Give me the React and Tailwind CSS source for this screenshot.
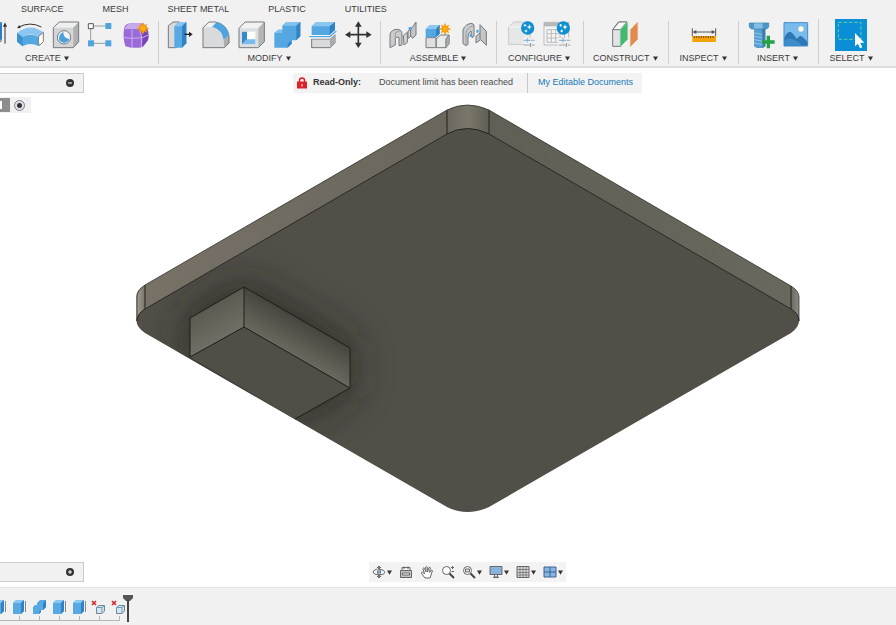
import React, { useState } from 'react';

const OUTLINE = '#77797b';

const Caret = () => (
    <svg viewBox="0 0 5 5" className="w-[5px] h-[5px] shrink-0" aria-hidden="true">
        <path d="M0 0.5H5L2.5 4.8Z" fill="#333" />
    </svg>
);

// Toolbar icons are all drawn on an 84 unit grid
const Icon = ({ children }) => (
    <svg viewBox="0 0 84 84" className="w-7 h-7 block overflow-visible" aria-hidden="true" strokeLinejoin="round">
        {children}
    </svg>
);

const Spark = ({ x, y }) => (
    <g transform={`translate(${x} ${y})`} fill="#f59c0b">
        <path d="M0-19L4-9L13-13L9-4L19 0L9 4L13 13L4 9L0 19L-4 9L-13 13L-9 4L-19 0L-9-4L-13-13L-4-9Z" />
        <circle r="7" fill="#fbae17" />
    </g>
);

const PlusBadge = ({ x, y }) => (
    <g transform={`translate(${x} ${y})`}>
        <circle r="20" fill="#0f8fd2" />
        <path d="M5-12L7-5L13-3L7-1L5 6L3-1L-3-3L3-5Z" fill="#fff" />
        <path d="M-8-12V-4M-12-8H-4M-5 5V13M-9 9H-1" stroke="#fff" strokeWidth="3" />
    </g>
);

const Sliders = ({ x, y }) => (
    <g transform={`translate(${x} ${y})`} strokeWidth="3" fill="none">
        <path d="M0 0H10M24 0H34M0 14H20M26 14H34" stroke="#a4a6a8" />
        <path d="M12-6V6M8 0H22" stroke="#6fb2e4" />
        <path d="M22 8V20" stroke="#8f9193" />
    </g>
);

const ICONS = {
    extrude: (
        <Icon>
            <path d="M10 16L26 3H72V54L58 66H10Z" fill="#4ba0de" />
            <path d="M58 16L72 3V54L58 66Z" fill="#2b7fc0" />
            <path d="M58 70L72 58" stroke={OUTLINE} strokeWidth="3" />
            <path d="M81 68V14" stroke="#333" strokeWidth="3" />
            <path d="M81 4L75 17H87Z" fill="#333" />
        </Icon>
    ),
    revolve: (
        <Icon>
            <path d="M13 19Q48 0 82 18" fill="none" stroke="#333" strokeWidth="3" />
            <path d="M9 22L16 12L20 21Z" fill="#333" />
            <path d="M9 36Q48 4 88 34L74 48Q48 32 26 48L9 36Z" fill="#8cc6f0" />
            <path d="M9 36L26 48Q48 34 74 48V76Q48 62 26 76L9 62Z" fill="#55a7e2" />
            <path d="M9 36L26 48V76L9 62Z" fill="#3c91d2" />
            <path d="M74 46L88 34V62L76 74Q70 60 74 46Z" fill="#fff" stroke={OUTLINE} strokeWidth="3" />
        </Icon>
    ),
    hole: (
        <Icon>
            <path d="M10 20L28 3H86V62L70 80H10Z" fill="#d4d5d6" />
            <path d="M10 20L28 3H86L70 20Z" fill="#eeefef" />
            <path d="M70 20L86 3V62L70 80Z" fill="#aeb0b2" />
            <path d="M10 20L28 3H86V62L70 80H10Z" fill="none" stroke={OUTLINE} strokeWidth="3" />
            <circle cx="42" cy="49" r="20" fill="#f3f4f4" stroke={OUTLINE} strokeWidth="3" />
            <path d="M40 33Q40 52 58 54A17 17 0 0 1 28 58Q24 40 40 33Z" fill="#4c9fdc" />
        </Icon>
    ),
    pattern: (
        <Icon>
            <path d="M24 15H58M14 24V58M24 67H58" stroke="#9a9c9e" strokeWidth="3" />
            <rect x="7" y="8" width="15" height="15" fill="#fff" stroke="#555" strokeWidth="3" />
            <rect x="58" y="6" width="18" height="18" fill="#4fa3df" />
            <rect x="6" y="58" width="18" height="18" fill="#4fa3df" />
            <rect x="58" y="58" width="18" height="18" fill="#4fa3df" />
        </Icon>
    ),
    form: (
        <Icon>
            <path d="M6 24Q8 8 26 7H62Q80 14 80 44Q78 62 62 78Q36 84 10 76Q2 50 6 24Z" fill="#9a6bd8" />
            <path d="M8 24Q14 8 28 7H60L52 24Q28 20 8 24Z" fill="#c7a9f0" />
            <path d="M56 24L66 14Q84 34 78 58L60 78Q64 50 56 24Z" fill="#7743b5" />
            <path d="M30 22V79M5 50Q34 54 60 50L80 42M8 24Q30 19 54 24Q62 50 58 78M30 22L42 7" fill="none" stroke="#c9aef2" strokeWidth="3" />
            <Spark x={63} y={22} />
        </Icon>
    ),
    pressPull: (
        <Icon>
            <path d="M10 14L24 3H44V68L34 80H10Z" fill="#d9dadb" stroke={OUTLINE} strokeWidth="3" />
            <path d="M28 16L42 3H64V67L51 80H28Z" fill="#57a8e3" />
            <path d="M28 16L42 3H64L51 16Z" fill="#8cc7f2" />
            <path d="M51 16L64 3V67L51 80Z" fill="#2f83c4" />
            <path d="M58 40H74" stroke="#222" strokeWidth="4" />
            <path d="M72 32L83 40L72 48Z" fill="#222" />
        </Icon>
    ),
    fillet: (
        <Icon>
            <path d="M6 20L24 3H44Q78 10 84 44V66L70 80H6Z" fill="#d9dadb" />
            <path d="M68 58L84 42V66L70 80Z" fill="#aaacae" />
            <path d="M6 20L24 3H44L32 18Z" fill="#f2f2f2" />
            <path d="M6 20L24 3H44Q78 10 84 44V66L70 80H6Z" fill="none" stroke={OUTLINE} strokeWidth="3" />
            <path d="M34 17L48 3Q78 12 84 42L68 56Q64 26 34 17Z" fill="#4fa4e0" />
        </Icon>
    ),
    shell: (
        <Icon>
            <path d="M6 22L24 3H82V62L64 80H6Z" fill="#dddedf" />
            <path d="M6 22L24 3H82L64 22Z" fill="#f2f2f2" />
            <path d="M64 22L82 3V62L64 80Z" fill="#b4b6b8" />
            <path d="M6 22L24 3H82V62L64 80H6Z" fill="none" stroke={OUTLINE} strokeWidth="3" />
            <rect x="15" y="32" width="40" height="38" fill="#fff" />
            <path d="M15 32L30 32V55L15 70Z" fill="#3489ca" />
            <path d="M15 70L30 55H55V70Z" fill="#7cbcec" />
        </Icon>
    ),
    combine: (
        <Icon>
            <path d="M4 36L16 26H28V14L40 3H82V46L70 58H56V68L44 80H4Z" fill="#55a7e2" />
            <path d="M28 14L40 3H82L70 14Z" fill="#83c1ef" />
            <path d="M4 36L16 26H28V36Z" fill="#83c1ef" />
            <path d="M70 14L82 3V46L70 58ZM44 68L56 58V68L44 80Z" fill="#3285c6" />
        </Icon>
    ),
    split: (
        <Icon>
            <path d="M8 16L22 3H78V28L62 42H8Z" fill="#55a7e2" />
            <path d="M8 16L22 3H78L62 16Z" fill="#8cc7f2" />
            <path d="M62 16L78 3V28L62 42Z" fill="#2f83c4" />
            <path d="M8 54H62L78 40V66L64 80H8Z" fill="#d9dadb" stroke={OUTLINE} strokeWidth="3" />
            <path d="M62 54L78 40V66L64 80Z" fill="#a9abad" />
            <path d="M2 48H62L82 30" fill="none" stroke="#fff" strokeWidth="9" />
            <path d="M1 47H62L82 30" fill="none" stroke="#4fa4e0" strokeWidth="4" />
        </Icon>
    ),
    move: (
        <Icon>
            <path d="M40 12V70M11 41H69" stroke="#333" strokeWidth="5" />
            <path d="M40 1L30 17H50ZM40 81L30 65H50ZM0 41L16 31V51ZM80 41L64 31V51Z" fill="#333" />
        </Icon>
    ),
    joint: (
        <Icon>
            <path d="M6 80V40Q10 25 28 25Q42 26 42 40V72L33 74V50Q26 44 22 53V72Z" fill="#c9cbcc" stroke={OUTLINE} strokeWidth="3" />
            <path d="M22 53V35L38 28" fill="none" stroke="#9a9c9e" strokeWidth="3" />
            <path d="M46 44L58 34V64L48 72ZM60 30L68 24V46L60 52Z" fill="#d4d5d6" stroke={OUTLINE} strokeWidth="3" />
            <path d="M68 26L84 3V42L74 52L68 44Z" fill="#c3c5c7" stroke={OUTLINE} strokeWidth="3" />
            <path d="M62 18H71V27H62Z" fill="#55a7e2" />
        </Icon>
    ),
    component: (
        <Icon>
            <path d="M6 50H36V80H6Z" fill="#dedfe0" stroke={OUTLINE} strokeWidth="3" />
            <path d="M37 54L49 42H75L66 54V80H37Z" fill="#e9eaea" stroke={OUTLINE} strokeWidth="3" />
            <path d="M66 54L76 42V68L66 80Z" fill="#a9abad" stroke={OUTLINE} strokeWidth="2" />
            <path d="M5 24L17 12H47V38L36 49H5Z" fill="#55a7e2" />
            <path d="M5 24L17 12H47L36 24Z" fill="#8cc7f2" />
            <path d="M36 24L47 12V38L36 49Z" fill="#2f83c4" />
            <Spark x={63} y={24} />
        </Icon>
    ),
    asBuilt: (
        <Icon>
            <path d="M9 68V26Q17 8 36 7L42 12V46L36 50L33 30Q24 34 24 48V70L18 74Z" fill="#c9cbcc" stroke={OUTLINE} strokeWidth="3" />
            <path d="M18 72V34Q22 20 40 14" fill="none" stroke="#9a9c9e" strokeWidth="3" />
            <path d="M48 46L60 36V11L79 31V73L62 56L48 66Z" fill="#c3c5c7" stroke={OUTLINE} strokeWidth="3" />
            <path d="M60 36V56" stroke={OUTLINE} strokeWidth="3" />
            <path d="M29 38H36V48H29ZM49 26H56V35H49Z" fill="#55a7e2" />
        </Icon>
    ),
    configure: (
        <Icon>
            <path d="M5 18L20 3H70V56L56 70H5Z" fill="#e6e7e7" stroke="#c6c8c9" strokeWidth="3" />
            <path d="M5 18H56V70" fill="none" stroke="#f5f5f5" strokeWidth="3" />
            <rect x="48" y="50" width="36" height="32" fill="#f0f0f0" />
            <PlusBadge x={62} y={21} />
            <Sliders x={49} y={58} />
        </Icon>
    ),
    configTable: (
        <Icon>
            <rect x="3" y="4" width="74" height="68" fill="#f4f4f4" stroke="#b9bbbc" strokeWidth="3" />
            <rect x="3" y="4" width="74" height="12" fill="#b6b8b9" />
            <path d="M12 26H64V64H12ZM12 38H64M12 51H64M25 26V64M38 26V64M51 26V64" fill="none" stroke="#b9bbbc" strokeWidth="3" />
            <rect x="44" y="50" width="40" height="32" fill="#f0f0f0" />
            <PlusBadge x={61} y={21} />
            <Sliders x={48} y={58} />
        </Icon>
    ),
    plane: (
        <Icon>
            <path d="M5 26L22 3H48L30 22V76H5Z" fill="#e2e3e4" stroke={OUTLINE} strokeWidth="3" />
            <path d="M5 26L24 3H48L28 26Z" fill="#f6f6f6" stroke={OUTLINE} strokeWidth="3" />
            <path d="M28 26L50 3V55L28 77Z" fill="#43b871" stroke="#8fd3aa" strokeWidth="2" />
            <path d="M58 26L80 3V55L58 77Z" fill="#e08a4f" stroke="#eeb18a" strokeWidth="2" />
        </Icon>
    ),
    measure: (
        <Icon>
            <path d="M10 22V46M80 22V46M14 33H76" stroke="#555" strokeWidth="3" />
            <path d="M11 33L22 27V39ZM79 33L68 27V39Z" fill="#555" />
            <rect x="10" y="45" width="71" height="18" fill="#f4a30c" />
            <path d="M16 45V51M23 45V51M30 45V51M37 45V51M44 45V51M51 45V51M58 45V51M65 45V51M72 45V51" stroke="#7a4b00" strokeWidth="3" />
        </Icon>
    ),
    fastener: (
        <Icon>
            <path d="M24 24H58V76L50 81H32L24 76Z" fill="#5a9fd0" />
            <path d="M24 36L58 42M24 46L58 52M24 56L58 62M24 66L58 72" stroke="#8fc6ec" strokeWidth="3" />
            <path d="M48 24H58V76L50 81Z" fill="#3b7fb0" />
            <path d="M10 6H68V18L62 24H16L10 18Z" fill="#4f96c9" stroke="#377cad" strokeWidth="2" />
            <path d="M24 7H50V23H24Z" fill="#84bee6" />
            <path d="M67 44V82M48 63H86" stroke="#23a249" strokeWidth="10" />
        </Icon>
    ),
    canvas: (
        <Icon>
            <rect x="6" y="5" width="71" height="70" fill="#79bbec" stroke="#438fcc" strokeWidth="3" />
            <circle cx="57" cy="24" r="8" fill="#fffbe0" />
            <path d="M7 52Q14 32 24 32Q30 32 44 53Q54 40 62 48L76 62V74H7Z" fill="#2b78b5" />
            <path d="M7 60Q28 42 60 74H7Z" fill="#3c8dca" />
        </Icon>
    ),
};

const GROUPS = [
    { label: 'MODIFY', pad: 'pl-[6px] pr-[7px]', tools: ['pressPull', 'fillet', 'shell', 'combine', 'split', 'move'] },
    { label: 'ASSEMBLE', pad: 'pl-[7px] pr-2', tools: ['joint', 'component', 'asBuilt'] },
    { label: 'CONFIGURE', pad: 'pl-[10px] pr-3', tools: ['configure', 'configTable'] },
    { label: 'CONSTRUCT', pad: 'pl-[9px] pr-[10px]', tools: ['plane'] },
    { label: 'INSPECT', pad: 'px-[11px]', tools: ['measure'] },
    { label: 'INSERT', pad: 'pl-[7px] pr-2', tools: ['fastener', 'canvas'] },
];

const TABS = ['SURFACE', 'MESH', 'SHEET METAL', 'PLASTIC', 'UTILITIES'];

const ToolButton = ({ name }) => (
    <button type="button" aria-label={name} className="w-7 h-7 shrink-0">
        {ICONS[name]}
    </button>
);

const GroupLabel = ({ children }) => (
    <button type="button" className="flex items-center gap-[3px] leading-3 whitespace-nowrap">
        {children}
        <Caret />
    </button>
);

const Toolbar = () => (
    <header className="bg-[#f1f1f1] border-b-2 border-[#dcdcdc] overflow-hidden shrink-0 pb-[2px]">
        <nav className="flex gap-[39px] pl-[21px] pt-[3px] leading-3">
            {TABS.map((t) => (
                <button key={t} type="button" className="whitespace-nowrap">{t}</button>
            ))}
        </nav>
        <div className="flex items-start pt-1">
            {/* The first group runs off the left edge of the window */}
            <div className="w-[158px] shrink-0 flex flex-col mt-[2px]">
                <div className="flex justify-end gap-2 pr-2">
                    {['extrude', 'revolve', 'hole', 'pattern', 'form'].map((n) => <ToolButton key={n} name={n} />)}
                </div>
                <div className="pl-[25px] pt-[3px]"><GroupLabel>CREATE</GroupLabel></div>
            </div>
            {GROUPS.map((g) => (
                <div key={g.label} className={`flex flex-col items-center shrink-0 border-l border-[#cfcfcf] mt-[2px] ${g.pad}`}>
                    <div className="flex gap-2">
                        {g.tools.map((n) => <ToolButton key={n} name={n} />)}
                    </div>
                    <div className="pt-[3px]"><GroupLabel>{g.label}</GroupLabel></div>
                </div>
            ))}
            <div className="flex flex-col items-center shrink-0 border-l border-[#cfcfcf] px-[11px]">
                <button type="button" aria-label="select" className="w-8 h-8">
                    <svg viewBox="0 0 96 96" className="w-8 h-8 block" aria-hidden="true">
                        <rect width="96" height="96" fill="#0a8fd6" />
                        <rect x="10" y="10" width="68" height="51" fill="none" stroke="#62d59a" strokeWidth="3" strokeDasharray="10 6" />
                        <path d="M60 42V82L69 74L75 88L82 85L76 71H88Z" fill="#fff" />
                    </svg>
                </button>
                <div className="pt-px"><GroupLabel>SELECT</GroupLabel></div>
            </div>
        </div>
    </header>
);

const Model = () => (
    <svg viewBox="0 68 896 519" className="absolute inset-0 w-full h-full" aria-hidden="true">
        <defs>
            <linearGradient id="leftSide" x1="0" x2="1">
                <stop offset="0" stopColor="#777166" />
                <stop offset="1" stopColor="#6a665c" />
            </linearGradient>
            <linearGradient id="rightSide" x1="0" x2="1">
                <stop offset="0" stopColor="#605f55" />
                <stop offset="1" stopColor="#69685d" />
            </linearGradient>
            <linearGradient id="topCorner" x1="0" x2="1">
                <stop offset="0" stopColor="#6c675c" />
                <stop offset="0.5" stopColor="#7b776b" />
                <stop offset="1" stopColor="#605f55" />
            </linearGradient>
            <linearGradient id="leftCorner" x1="0" x2="1">
                <stop offset="0" stopColor="#a5a294" />
                <stop offset="1" stopColor="#77736a" />
            </linearGradient>
            <linearGradient id="rightCorner" x1="0" x2="1">
                <stop offset="0" stopColor="#6b6a5f" />
                <stop offset="1" stopColor="#8d8b80" />
            </linearGradient>
            <linearGradient id="blockLeft" gradientUnits="userSpaceOnUse" x1="205" y1="305" x2="228" y2="345">
                <stop offset="0" stopColor="#5a574e" />
                <stop offset="1" stopColor="#76736a" />
            </linearGradient>
            <linearGradient id="blockRight" gradientUnits="userSpaceOnUse" x1="306" y1="322" x2="286" y2="357">
                <stop offset="0" stopColor="#46443d" />
                <stop offset="1" stopColor="#706d63" />
            </linearGradient>
            <filter id="soft" x="-60%" y="-60%" width="220%" height="220%">
                <feGaussianBlur stdDeviation="20" />
            </filter>
            <clipPath id="faceClip">
                <path d="M447 134Q467 123 489 134L791 309Q807 321 791 333L489 507Q467 517 447 507L145 333Q128 321 145 309Z" />
            </clipPath>
        </defs>
        <path d="M145 285L447 110V134L145 309Z" fill="url(#leftSide)" />
        <path d="M489 110L791 286V309L489 134Z" fill="url(#rightSide)" />
        <path d="M447 110Q467 100 489 110V134H447Z" fill="url(#topCorner)" />
        <path d="M145 285Q136 290 136 297V321L145 309Z" fill="url(#leftCorner)" />
        <path d="M791 286Q799 291 799 297V321L791 309Z" fill="url(#rightCorner)" />
        <g clipPath="url(#faceClip)">
            <rect x="130" y="120" width="680" height="400" fill="#514f48" />
            <path d="M186 362V316L243 282L352 345V390L300 420Z" fill="#24231e" opacity="0.75" filter="url(#soft)" />
        </g>
        <g fill="none" stroke="#24231f" strokeWidth="1">
            <path d="M137 321Q137 314 145 309L447 134Q467 123 489 134L791 309Q799 314 799 321" />
            <path d="M137 321V297Q137 290 145 285L447 110Q467 100 489 110L791 286Q799 291 799 297V321" strokeOpacity="0.7" />
            <path d="M447 110V134M489 110V134M145 285V309M791 286V309" />
        </g>
        <path d="M190 318L244 287V327L190 357Z" fill="url(#blockLeft)" />
        <path d="M244 287L350 348V388L244 327Z" fill="url(#blockRight)" />
        <path d="M190 357L244 327L350 388L295 419Z" fill="#504e46" />
        <path d="M190 357V318L244 287L350 348V388L295 419M190 357L244 327L350 388M244 287V327" fill="none" stroke="#1f1e1a" />
    </svg>
);

const SidePanel = ({ open, onToggle, label }) => (
    <div className="w-[84px] h-5 shrink-0 flex items-center justify-end pr-[9px] bg-[#f1f1f1] border border-l-0 border-[#cbcbcb]">
        <button type="button" aria-label={label} onClick={onToggle} className="w-2 h-2">
            <svg viewBox="0 0 8 8" className="w-2 h-2 block">
                <circle cx="4" cy="4" r="4" fill="#333" />
                <path d={open ? 'M2 4H6' : 'M2 4H6M4 2V6'} stroke="#fff" />
            </svg>
        </button>
    </div>
);

const Notice = () => (
    <div className="flex items-center h-5 bg-[#f3f3f3] pl-1">
        <svg viewBox="0 0 10 12" className="w-[10px] h-3" aria-hidden="true">
            <path d="M2.5 5V3.5Q2.5 1 5 1T7.5 3.5V5" fill="none" stroke="#d8232a" strokeWidth="1.5" />
            <rect y="4.5" width="10" height="7" fill="#d8232a" />
            <path d="M5 7V9.5" stroke="#fff" />
        </svg>
        <strong className="pl-[6px] text-[#333]">Read-Only:</strong>
        <span className="pl-[18px] pr-[14px] text-[#4a4a4a]">Document limit has been reached</span>
        <a href="#documents" className="h-full flex items-center border-l border-[#c8c8c8] pl-[10px] pr-[9px] text-[#1678b8]">My Editable Documents</a>
    </div>
);

const NAV = [
    {
        name: 'Orbit', menu: true, art: (
            <>
                <path d="M7 1.5Q10 7 7 12.5Q4 7 7 1.5ZM7 4Q13 5 13 7.5Q12 10 7 10Q1 9.5 1 7Q2 4.5 5 4" />
                <path d="M5 3L7 1L9 3M5 11L7 13L9 11" />
                <circle cx="7" cy="7" r="1" fill="#3d8fd0" stroke="none" />
            </>
        ),
    },
    {
        name: 'Look At', art: (
            <>
                <path d="M1.5 5.5H12.5V12.5H1.5Z" fill="#c4c4c4" />
                <path d="M3 5V2.5H11V5M5 1.5V4M9 1.5V4" />
                <path d="M3.5 8H10.5V10H3.5Z" fill="#fff" />
            </>
        ),
    },
    {
        name: 'Pan', art: (
            <path d="M5 13L1.5 8.5Q1 7 2.5 7L4.5 9L3 3.5Q3.5 2 4.5 3.5L6 7L5.7 2Q6.5 0.8 7.2 2L7.5 7L9 2.5Q10 1.5 10.3 3L9.5 7.5L11.5 5Q13 5 12 7L10 13Z" fill="#fff" />
        ),
    },
    {
        name: 'Zoom', art: (
            <>
                <circle cx="5.5" cy="5.5" r="4" fill="#fff" />
                <path d="M8.5 8.5L13 13" strokeWidth="2" stroke="#444" />
                <path d="M10 2.5H13M11.5 1V4M10.5 6.5H13" />
            </>
        ),
    },
    {
        name: 'Fit', menu: true, art: (
            <>
                <circle cx="5.5" cy="5.5" r="4" fill="#fff" />
                <path d="M3.5 4H7.5V7H3.5Z" fill="#ddd" />
                <path d="M8.5 8.5L13 13" strokeWidth="2" stroke="#444" />
            </>
        ),
    },
    {
        name: 'Display Settings', menu: true, art: (
            <>
                <path d="M1 1.5H13V9.5H1Z" fill="#8ab2dd" />
                <path d="M5.5 10V12H8.5V10M4 12.5H10" />
            </>
        ),
    },
    {
        name: 'Grid and Snaps', menu: true, art: (
            <>
                <path d="M1 1.5H13V12.5H1Z" fill="#d8d8d8" />
                <path d="M4 1.5V12.5M7 1.5V12.5M10 1.5V12.5M1 4.5H13M1 7.5H13M1 10H13" strokeWidth="0.7" />
            </>
        ),
    },
    {
        name: 'Viewports', menu: true, art: (
            <>
                <path d="M1 2H13V12H1Z" fill="#86b5e6" stroke="#41638a" />
                <path d="M7 2V12M1 7H13" stroke="#41638a" />
            </>
        ),
    },
];

const NavBar = () => (
    <div className="flex items-center h-5 gap-[7px] px-[3px] bg-[#f3f3f3]">
        {NAV.map((n) => (
            <button key={n.name} type="button" aria-label={n.name} className="flex items-center gap-px">
                <svg viewBox="0 0 14 14" className="w-[14px] h-[14px] block" fill="none" stroke="#666" aria-hidden="true">
                    {n.art}
                </svg>
                {n.menu && <Caret />}
            </button>
        ))}
    </div>
);

const STEPS = ['extrude', 'extrude', 'combine', 'extrude', 'extrude', 'failed', 'failed'];

const StepIcon = ({ kind }) => (
    <svg viewBox="0 0 16 16" className="w-4 h-4 block" aria-hidden="true">
        {kind === 'extrude' && (
            <>
                <path d="M2 4L5 1H13V12L10 15H2Z" fill="#57a8e3" />
                <path d="M2 4L5 1H13L10 4Z" fill="#8cc7f2" />
                <path d="M10 4L13 1V12L10 15Z" fill="#2f83c4" />
                <path d="M14.5 2V13" stroke="#888" />
            </>
        )}
        {kind === 'combine' && (
            <>
                <path d="M2 8L4 6H6V4L9 1H15V8L12 11H10V13L8 15H2Z" fill="#57a8e3" />
                <path d="M12 4L15 1V8L12 11ZM8 13L10 11V13L8 15Z" fill="#2f83c4" />
            </>
        )}
        {kind === 'failed' && (
            <>
                <path d="M1 2L5 6M5 2L1 6" stroke="#d0282e" strokeWidth="1.6" />
                <path d="M5.5 8.5L8 6.5H13.5V12L11 14.5H5.5Z" fill="#d5e6f1" stroke="#77858f" />
                <path d="M5.5 8.5H11V14.5M11 8.5L13.5 6.5" fill="none" stroke="#6a9dbd" />
            </>
        )}
    </svg>
);

const Timeline = () => (
    <footer className="h-[38px] shrink-0 bg-[#f1f1f1] border-t border-[#e2e2e2] flex items-start pt-[7px] overflow-hidden">
        <div className="flex -ml-[11px] pt-1">
            {STEPS.map((s, i) => (
                <button key={i} type="button" aria-label={`Step ${i + 1}`} className="w-5 flex flex-col items-center">
                    <StepIcon kind={s} />
                    <svg viewBox="0 0 20 6" className="w-5 h-[6px] block" aria-hidden="true">
                        <path d={i === STEPS.length - 1 ? 'M0 5.5H10.5V1' : 'M0 5.5H20M10.5 5V1'} fill="none" stroke="#b5b5b5" />
                    </svg>
                </button>
            ))}
        </div>
        <svg viewBox="0 0 10 27" className="-ml-[6px] w-[10px] h-[27px]" aria-hidden="true">
            <path d="M0 0H10V3L7 6H3L0 3Z" fill="#555" />
            <path d="M5 5V27" stroke="#444" strokeWidth="2" />
        </svg>
    </footer>
);

const App = () => {
    const [browserOpen, setBrowserOpen] = useState(true);
    const [commentsOpen, setCommentsOpen] = useState(false);

    return (
        <div className="min-h-screen flex flex-col bg-white text-[#3c3c3c] text-[9px] font-['Liberation_Sans',Arial,sans-serif]">
            <Toolbar />
            <main className="relative flex-1 flex flex-col">
                <Model />
                <div className="relative flex pt-[5px]">
                    <SidePanel open={browserOpen} onToggle={() => setBrowserOpen(!browserOpen)} label="Toggle browser" />
                    <div className="flex-1 flex justify-center pr-[45px]"><Notice /></div>
                </div>
                {browserOpen && (
                    <div className="relative mt-1 w-[31px] h-4 flex items-center justify-between pr-[6px] bg-[#f1f1f1]">
                        <span className="w-[10px] h-[14px] bg-[#8d8d8d] flex items-center">
                            <span className="w-[2px] h-2 bg-white" />
                        </span>
                        <input
                            type="radio"
                            name="component"
                            aria-label="Activate component"
                            defaultChecked
                            className="appearance-none w-[11px] h-[11px] rounded-full border border-[#7d8088] bg-[#e0e2e8] checked:bg-[radial-gradient(circle,#333_0_2px,#dfe1e8_3px)]"
                        />
                    </div>
                )}
                <div className="relative flex mt-auto pb-[5px]">
                    <SidePanel open={commentsOpen} onToggle={() => setCommentsOpen(!commentsOpen)} label="Toggle comments" />
                    <div className="flex-1 flex justify-center pr-[45px]"><NavBar /></div>
                </div>
            </main>
            <Timeline />
        </div>
    );
};

export default App;
